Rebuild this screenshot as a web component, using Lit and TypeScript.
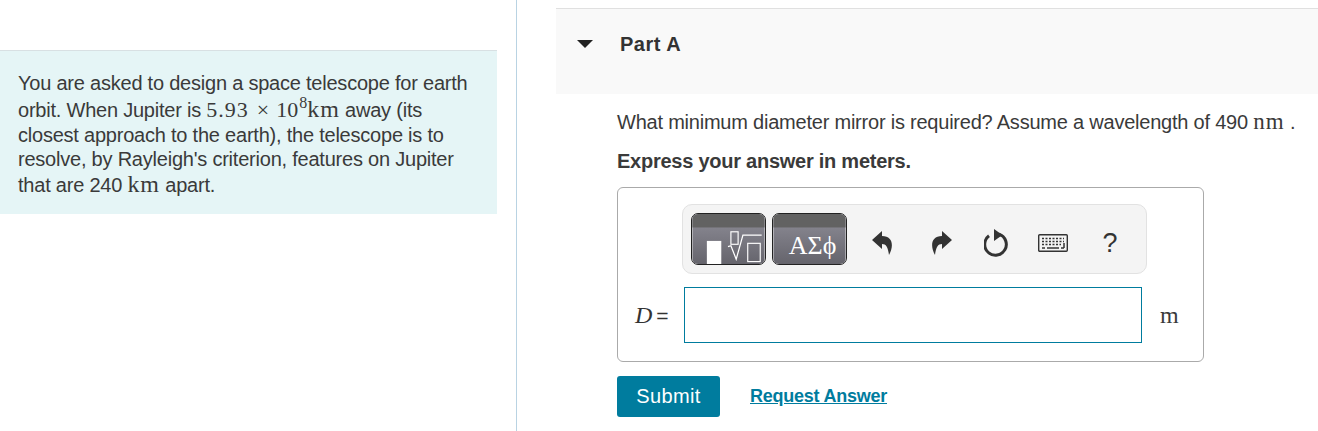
import { LitElement, html, css } from "lit";
import { customElement } from "lit/decorators.js";

@customElement("app-root")
export class AppRoot extends LitElement {
  static styles = css`
    :host { display: block; width: 1318px; height: 431px; overflow: hidden; background: #fff; color: #3a3a3a; font-family: "Liberation Sans", Arial, sans-serif; font-size: 20px; }
    * { box-sizing: border-box; }
    .page { display: grid; grid-template-columns: 517px 1fr; height: 431px; }
    .left { border-right: 1px solid #b9d3e3; padding-top: 50px; padding-right: 19px; }
    .intro { background: #e5f5f6; border-top: 1px solid #d8e0e3; height: 164px; padding: 20px 20px 0 18px; line-height: 24.5px; letter-spacing: -0.22px; }
    .m { font-family: "Liberation Serif", serif; letter-spacing: 0; }
    .num { font-size: 22px; letter-spacing: 1px; line-height: 27px; }
    .ten { font-size: 22px; }
    .u { font-size: 23px; letter-spacing: 1px; }
    .km { font-size: 24px; letter-spacing: 0.9px; }
    .times { font-size: 22px; margin: 0 7px 0 8px; }
    sup { font-size: 16px; line-height: 0; vertical-align: 9px; margin: 0 0 0 1px; }
    .right { padding: 8px 0 0 39px; }
    .head { height: 86px; background: #f9f9f9; border-top: 1px solid #e0e0e0; display: flex; align-items: flex-start; padding: 23px 0 0 22px; }
    .caret { width: 0; height: 0; border: 8px solid transparent; border-top: 8px solid #222; border-bottom: 0; margin: 8px 26px 0 -1px; }
    .title { font-weight: bold; line-height: 24px; color: #333; letter-spacing: 0.5px; margin-left: 1px; }
    .body { padding: 16px 0 0 61px; }
    .q { line-height: 24px; letter-spacing: -0.22px; white-space: nowrap; }
    .ex { font-weight: bold; line-height: 24px; margin-top: 15px; letter-spacing: -0.25px; }
    .box { width: 587px; height: 175px; margin-top: 14px; border: 1px solid #aaa; border-radius: 6px; padding: 16px 0 0 64px; }
    .tools { width: 465px; height: 70px; background: #f4f4f4; border: 1px solid #e2e2e2; border-radius: 10px; display: flex; align-items: flex-start; padding: 8px 0 0 8px; }
    .btn { width: 75px; height: 52px; border: 1px solid #222; border-radius: 7px; overflow: hidden; display: block; margin-right: 6px; flex: none; }
    .icons { display: flex; align-items: center; height: 60px; }
    .ic { display: flex; flex: none; }
    .undo { margin-left: 19px; }
    .redo { margin-left: 38px; }
    .refresh { margin-left: 32px; }
    .keys { margin-left: 29px; }
    .help { margin-left: 30px; width: 24px; justify-content: center; font-size: 27px; color: #333; line-height: 1; }
    .row { display: flex; align-items: center; height: 56px; margin: 13px 0 0 -47px; }
    .var { width: 49px; display: flex; line-height: 1; align-items: baseline; color: #333; }
    .var i { font-family: "Liberation Serif", serif; font-size: 24px; }
    .var span { margin-left: 4px; font-size: 21px; }
    .input { width: 458px; height: 56px; border: 1px solid #007c9e; background: #fff; flex: none; }
    .unit { margin-left: 18px; font-family: "Liberation Serif", serif; font-size: 24px; }
    .actions { display: flex; align-items: center; margin-top: 14px; }
    .submit { width: 103px; height: 41px; background: #007c9e; color: #fff; border-radius: 3px; display: flex; align-items: center; justify-content: center; font-size: 20px; letter-spacing: 0.4px; }
    .link { margin-left: 30px; font-weight: bold; font-size: 18px; color: #007c9e; text-decoration: underline; letter-spacing: -0.24px; }
  `;

  render() {
    return html`<div class="page">
      <section class="left">
        <div class="intro">You are asked to design a space telescope for earth<br />orbit. When Jupiter is <span class="m"><span class="num">5.93</span><span class="times">×</span><span class="ten">10</span><sup>8</sup><span class="km">km</span></span> away (its<br />closest approach to the earth), the telescope is to<br />resolve, by Rayleigh's criterion, features on Jupiter<br />that are 240 <span class="m km">km</span> apart.</div>
      </section>
      <section class="right">
        <div class="head"><span class="caret"></span><span class="title">Part A</span></div>
        <div class="body">
          <div class="q">What minimum diameter mirror is required? Assume a wavelength of 490 <span class="m u">nm</span> .</div>
          <div class="ex">Express your answer in meters.</div>
          <div class="box">
            <div class="tools">
              <svg class="btn" viewBox="0 0 75 52">
                <defs><linearGradient id="g1" x1="0" y1="0" x2="0" y2="1"><stop offset="0" stop-color="#8f8e98"/><stop offset="1" stop-color="#65646c"/></linearGradient></defs>
                <rect width="75" height="52" fill="url(#g1)"/><rect width="75" height="14" fill="#626262"/>
                <rect x="15" y="28" width="15" height="24" fill="#fff"/>
                <rect x="40" y="18.500" width="7.500" height="13" fill="none" stroke="#fff" stroke-width="1.200"/>
                <path d="M37 34l3-1 5.500 14L52.500 22H72" fill="none" stroke="#fff" stroke-width="1.300"/>
                <rect x="57.500" y="30.500" width="13" height="19" fill="none" stroke="#fff" stroke-width="1.200"/>
              </svg>
              <svg class="btn" viewBox="0 0 75 52">
                <defs><linearGradient id="g2" x1="0" y1="0" x2="0" y2="1"><stop offset="0" stop-color="#8f8e98"/><stop offset="1" stop-color="#65646c"/></linearGradient></defs>
                <rect width="75" height="52" fill="url(#g2)"/><rect width="75" height="14" fill="#626262"/>
                <text x="16" y="42" font-family="Liberation Serif, serif" font-size="27" fill="#fff">ΑΣϕ</text>
              </svg>
              <div class="icons">
                <svg class="ic undo" width="21" height="24" viewBox="0 0 21 24"><path d="M10 0 0 9l10 9v-5c4 0 6 3 7 11 5-9 4-19-7-19z" fill="#333"/></svg>
                <svg class="ic redo" width="21" height="24" viewBox="0 0 21 24"><path d="M11 0l10 9-10 9v-5c-4 0-6 3-7 11C-1 15 0 5 11 5z" fill="#333"/></svg>
                <svg class="ic refresh" width="25" height="28" viewBox="0 0 25 28"><path d="M15 5.200A10.800 10.800 0 1 1 5 6.800" fill="none" stroke="#333" stroke-width="3"/><path d="M10 0l8.500 6L10 12z" fill="#333"/></svg>
                <svg class="ic keys" width="30" height="18" viewBox="0 0 30 18"><rect x=".7" y=".7" width="28.600" height="16.600" rx="1" fill="#f4f4f4" stroke="#333" stroke-width="1.400"/><path d="M4 4.500h22M4 7.500h22M4 10.500h19" stroke="#333" stroke-width="1.500" stroke-dasharray="2 1.500"/><path d="M4 14h3M9 14h12M23 14h3M26 9v5" stroke="#333" stroke-width="1.500"/></svg>
                <span class="ic help">?</span>
              </div>
            </div>
            <div class="row">
              <div class="var"><i>D</i><span>=</span></div>
              <div class="input"></div>
              <span class="unit">m</span>
            </div>
          </div>
          <div class="actions">
            <div class="submit">Submit</div>
            <a class="link">Request Answer</a>
          </div>
        </div>
      </section>
    </div>`;
  }
}
